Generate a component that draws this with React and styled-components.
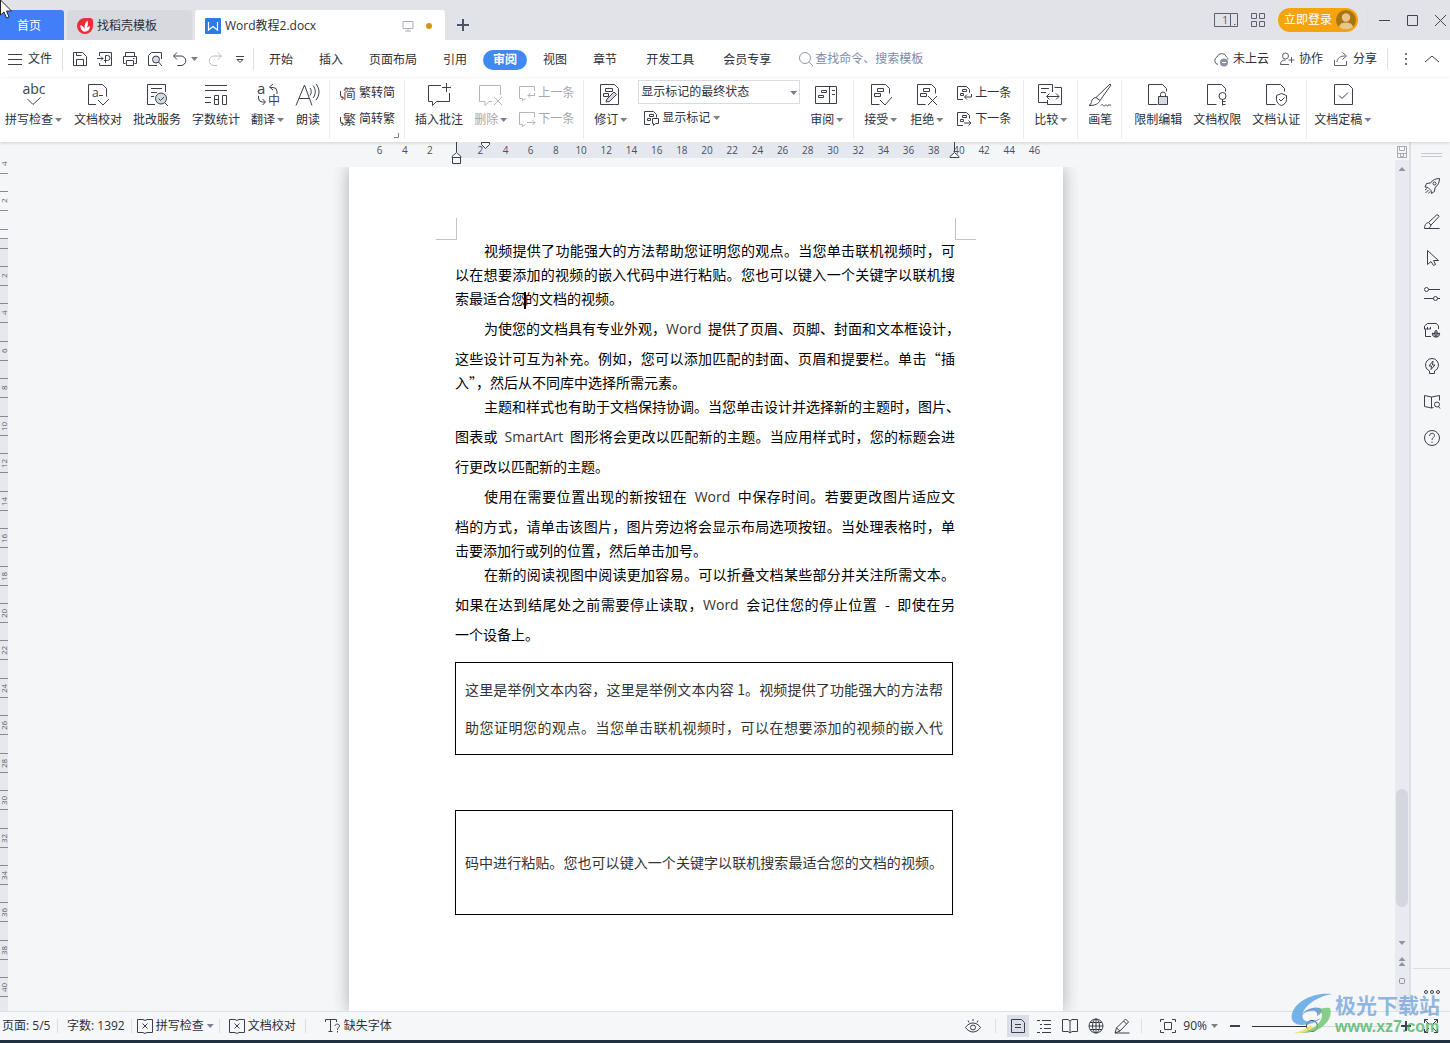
import React from "react";
import styled, { createGlobalStyle, css } from "styled-components";

const GlobalStyle = createGlobalStyle`
  *, *::before, *::after {
    box-sizing: border-box;
  }

  body {
    margin: 0;
    background: #f5f6f8;
    color: #2b303b;
    font-family: "Open Sans", "Noto Sans CJK SC", sans-serif;
    font-size: 12px;
    line-height: 16px;
  }

  button, input, select {
    font: inherit;
    color: inherit;
  }
`;

/* ---------- shared ---------- */

const App = styled.div`
  display: flex;
  flex-direction: column;
  height: 100vh;
  overflow: hidden;
`;

const PlainButton = styled.button`
  display: flex;
  align-items: center;
  justify-content: center;
  flex-shrink: 0;
  padding: 0;
  border: 0;
  background: none;
  white-space: nowrap;
`;

const Svg = styled.svg`
  display: block;
  flex-shrink: 0;
  fill: none;
  stroke: ${(p) => p.$color || "#3a3f4b"};
  stroke-width: ${(p) => p.$weight || 1};
  overflow: visible;

  text {
    fill: ${(p) => p.$color || "#3a3f4b"};
    stroke: none;
  }
`;

const Icon = ({ size = 16, box = size, color, weight, children }) => (
  <Svg width={size} height={size} viewBox={`0 0 ${box} ${box}`} $color={color} $weight={weight} aria-hidden="true">
    {children}
  </Svg>
);

const Caret = styled.span`
  flex-shrink: 0;
  width: 7px;
  height: 4px;
  background: ${(p) => p.$color || "#7b808c"};
  clip-path: ${(p) => (p.$up ? "polygon(50% 0, 100% 100%, 0 100%)" : "polygon(0 0, 100% 0, 50% 100%)")};
`;

const Rule = styled.span`
  flex-shrink: 0;
  width: 1px;
  height: ${(p) => p.$height || 22}px;
  background: #dddfe4;
`;

/* ---------- title bar ---------- */

const TitleBar = styled.header`
  display: flex;
  align-items: flex-end;
  flex-shrink: 0;
  height: 40px;
  background: #e2e3e8;
`;

const Tab = styled.button`
  display: flex;
  align-items: center;
  gap: 4px;
  width: ${(p) => p.$width}px;
  height: 30px;
  margin-right: 3px;
  padding: 2px 10px 0;
  border: 0;
  border-radius: 3px 3px 0 0;
  background: ${(p) => p.$bg};
  color: ${(p) => p.$color || "#2b303b"};
  white-space: nowrap;
`;

const HomeTab = styled(Tab)`
  justify-content: center;
  padding: 2px 6px 0 0;
`;

const TabStatus = styled.span`
  display: flex;
  align-items: center;
  gap: 12px;
  margin-left: auto;
  padding-right: 3px;
`;

const Unsaved = styled.span`
  width: 6px;
  height: 6px;
  border-radius: 50%;
  background: #d9940d;
`;

const NewTab = styled(PlainButton)`
  width: 30px;
  height: 30px;
`;

const WindowTools = styled.div`
  display: flex;
  align-items: center;
  gap: 13px;
  height: 40px;
  margin-left: auto;
  padding-right: 4px;
`;

const Login = styled(PlainButton)`
  gap: 4px;
  height: 24px;
  padding: 0 2px 0 6px;
  border-radius: 12px;
  background: #f6a40d;
  color: #fff;
`;

const Controls = styled.div`
  display: flex;
  align-items: center;
  gap: 17px;
  margin-left: -4px;

  ${Rule} {
    margin-right: -6px;
  }
`;

const Pointer = styled.div`
  position: absolute;
  top: 0;
  left: 0;
`;

/* ---------- menu bar ---------- */

const MenuBar = styled.nav`
  display: flex;
  align-items: center;
  flex-shrink: 0;
  height: 38px;
  background: #fff;
`;

const FileButton = styled(PlainButton)`
  gap: 6px;
  padding: 0 10px 0 8px;
`;

const QuickTools = styled.div`
  display: flex;
  align-items: center;
  gap: 9px;
  padding: 0 5px 0 9px;
`;

const UndoGroup = styled.div`
  display: flex;
  align-items: center;
  gap: 3px;
`;

const MenuTabs = styled.div`
  display: flex;
  gap: ${(p) => p.$gap}px;
  padding-top: 2px;
  padding-left: ${(p) => p.$left}px;
`;

const MenuTab = styled(PlainButton)`
  height: 20px;
  padding: 0 10px;
  border-radius: 10px;
  ${(p) =>
    p.$active &&
    css`
      background: #4189f2;
      color: #fff;
      font-weight: 700;
    `}
`;

const Search = styled.label`
  display: flex;
  align-items: center;
  gap: 2px;
  margin-left: 18px;

  input {
    width: 140px;
    padding: 0;
    border: 0;
    background: none;
    outline: 0;
  }

  input::placeholder {
    color: #7e8ba3;
    opacity: 1;
  }
`;

const ShareTools = styled.div`
  display: flex;
  align-items: center;
  gap: 10px;
  margin-left: auto;
  padding-right: 10px;

  button {
    gap: 4px;
  }
`;

/* ---------- ribbon ---------- */

const Ribbon = styled.section`
  display: flex;
  flex-shrink: 0;
  height: 64px;
  padding: 2px 0 3px;
  background: #fff;
  box-shadow: 0 1px 3px rgba(0, 0, 0, 0.16);
  position: relative;
`;

const Group = styled.div`
  position: relative;
  display: flex;
  align-items: flex-start;
  gap: ${(p) => p.$gap || 11}px;
  flex-shrink: 0;
  padding: 3px ${(p) => p.$right || 9}px 0 ${(p) => p.$left || 10}px;
  border-right: 1px solid #ebecef;

  &:last-child {
    border-right: 0;
  }
`;

const Launcher = styled(PlainButton)`
  position: absolute;
  right: 5px;
  bottom: 1px;
`;

const RibbonButton = styled(PlainButton)`
  flex-direction: column;
  gap: 5px;
  color: ${(p) => (p.disabled ? "#a6a8ad" : "#2b303b")};
`;

const Label = styled.span`
  display: flex;
  align-items: center;
  gap: 2px;
  height: 16px;

  ${Caret} {
    margin-right: 1px;
  }
`;

const Stack = styled.div`
  display: flex;
  flex-direction: column;
  gap: 10px;
  padding-top: 2px;
`;

const SmallButton = styled(PlainButton)`
  justify-content: flex-start;
  gap: 3px;
  height: 16px;
  color: ${(p) => (p.disabled ? "#a6a8ad" : "#2b303b")};
`;

const MarkupStack = styled.div`
  display: flex;
  flex-direction: column;
  gap: 6px;
  margin-top: -3px;

  ${SmallButton} {
    padding-left: 5px;
  }
`;

const SelectBox = styled.label`
  position: relative;

  select {
    display: block;
    width: 162px;
    height: 24px;
    padding: 0 16px 0 2px;
    border: 1px solid #d9dbe0;
    border-radius: 0;
    background: #fff;
    appearance: none;
  }

  ${Caret} {
    position: absolute;
    top: 11px;
    right: 3px;
    pointer-events: none;
  }
`;

const Big = ({ label, caret, disabled, children }) => (
  <RibbonButton disabled={disabled}>
    <Icon size={24} color={disabled ? "#b3b5ba" : undefined}>
      {children}
    </Icon>
    <Label>
      {label}
      {caret && <Caret />}
    </Label>
  </RibbonButton>
);

const Small = ({ label, caret, disabled, children }) => (
  <SmallButton disabled={disabled}>
    <Icon color={disabled ? "#b3b5ba" : undefined}>{children}</Icon>
    {label}
    {caret && <Caret />}
  </SmallButton>
);

/* ---------- work area ---------- */

const Work = styled.main`
  display: grid;
  grid-template-columns: 8px 1fr 16px 39px;
  flex: 1;
  min-height: 0;
`;

const SideRuler = styled.div`
  display: flex;
  flex-direction: column;
  padding: 3px 0 5px;
  background: linear-gradient(#f5f6f8 96px, #8d929c 96px, #8d929c 97px, #e6e8ee 97px);
`;

const SideCell = styled.div`
  display: flex;
  align-items: center;
  flex: 1;
  min-height: 0;

  span {
    width: 8px;
    height: 20px;
    border: solid #858a94;
    border-width: 1px 0;
    color: #5a5f6b;
    font-size: 8px;
    line-height: 8px;
    text-align: center;
    writing-mode: vertical-rl;
    transform: rotate(180deg);
  }

  &:first-child span {
    border-bottom: 0;
  }
`;

const Canvas = styled.div`
  display: flex;
  flex-direction: column;
  align-items: center;
  min-width: 0;
  padding-left: 9px;
  overflow: hidden;
`;

const TopRuler = styled.div`
  position: relative;
  display: flex;
  flex-shrink: 0;
  width: 714px;
  height: 25px;
  padding: 0 16px 0 18px;
  background: linear-gradient(#e6e8f0, #e6e8f0) 107px 0 / 499px 16px no-repeat;
  color: #4a5060;
  font-size: 10px;
  text-align: center;

  span {
    flex: 1;
  }
`;

const Marker = styled.div`
  position: absolute;
  top: 0;
  left: ${(p) => p.$left}px;
`;

const Page = styled.article`
  flex: 1;
  width: 714px;
  padding: 51px 108px 0 106px;
  background: #fff;
  box-shadow: 0 0 16px rgba(0, 0, 0, 0.3);
  clip-path: inset(0 -16px);
  color: #000;
  font-family: "Noto Sans CJK SC", sans-serif;
  font-size: 14px;
`;

const Corners = styled.div`
  display: flex;
  justify-content: space-between;
  height: 22px;
  margin: 0 -21px -2px -19px;
`;

const Corner = styled.span`
  width: 21px;
  border: solid #c3c3c3;
  border-width: ${(p) => (p.$right ? "0 0 1px 1px" : "0 1px 1px 0")};
`;

const Paragraph = styled.p`
  margin: 0;
`;

const Line = styled.span`
  display: block;
  padding-top: ${(p) => (p.$loose ? 6 : 0)}px;
  padding-left: ${(p) => (p.$first ? 29 : 0)}px;
  line-height: 24px;
  white-space: nowrap;
  text-align: justify;
  text-align-last: ${(p) => (p.$end ? "left" : "justify")};
`;

const Latin = styled.span`
  color: #333;
  font-family: "Open Sans", sans-serif;
  line-height: 14px;
`;

const TextCursor = styled.span`
  display: inline-block;
  width: 2px;
  height: 17px;
  margin: 0 -1px;
  background: #000;
  vertical-align: middle;
`;

const TextFrame = styled.section`
  display: flex;
  flex-direction: column;
  justify-content: center;
  height: ${(p) => p.$height}px;
  margin: ${(p) => p.$above}px 2px 0 0;
  padding: 0 9px 2px;
  border: 1px solid #000;
  color: #333;

  ${Line} {
    line-height: 38px;
  }
`;

const Scroll = styled.div`
  display: flex;
  flex-direction: column;
  align-items: center;
  padding-top: 4px;
  border-right: 2px solid #dfe0e5;
  background: linear-gradient(#f5f6f8 18px, #e9eaef 18px);
`;

const Thumb = styled.div`
  width: 12px;
  height: 118px;
  margin-top: auto;
  margin-bottom: 34px;
  border-radius: 6px;
  background: #d5d7df;
`;

const ScrollButtons = styled.div`
  display: flex;
  flex-direction: column;
  align-items: center;
  gap: 12px;
  padding-bottom: 27px;
`;

const ScrollUp = styled(PlainButton)`
  height: 22px;
`;

const DoubleArrow = styled.span`
  display: grid;
  gap: 1px;
`;

const Sidebar = styled.aside`
  display: flex;
  flex-direction: column;
  align-items: center;
  padding: 11px 0 0 2px;
`;

const Handle = styled.div`
  width: 21px;
  height: 4px;
  margin-bottom: 11px;
  border: solid #c6c8cf;
  border-width: 1px 0;
`;

const SideTool = styled(PlainButton)`
  width: 36px;
  height: 36px;
`;

const More = styled(PlainButton)`
  align-self: stretch;
  height: 43px;
  margin-top: auto;
  padding-top: 4px;
  border-top: 1px solid #dcdde2;
`;

/* ---------- status bar ---------- */

const StatusBar = styled.footer`
  display: flex;
  align-items: center;
  flex-shrink: 0;
  height: 32px;
  padding: 0 11px 0 2px;
  border-top: 1px solid #dfe0e4;
  border-bottom: 3px solid #22313f;
  background: #f6f7f9;
  white-space: nowrap;
`;

const StatusLeft = styled.div`
  display: flex;
  align-items: center;
  gap: 5px;

  button {
    gap: 3px;
  }
`;

const StatusText = styled.span`
  min-width: ${(p) => p.$width}px;
`;

const StatusTool = styled(PlainButton)`
  padding: 0 ${(p) => p.$right || 0}px 0 ${(p) => p.$left || 0}px;
`;

const StatusRight = styled.div`
  display: flex;
  align-items: center;
  gap: 4px;
  margin-left: auto;
`;

const Divider = styled.span`
  display: flex;
  padding: 0 ${(p) => p.$side}px;
`;

const ViewButton = styled(PlainButton)`
  width: 22px;
  height: 22px;
  background: ${(p) => (p.$active ? "#dbdee7" : "none")};
`;

const Zoom = styled.div`
  display: flex;
  align-items: center;
  gap: 12px;
  padding-left: 10px;
`;

const ZoomValue = styled(PlainButton)`
  gap: 4px;
  margin-left: -5px;
`;

const ZoomRange = styled.input`
  width: 141px;
  height: 14px;
  margin: 0 -4px 0 0;
  appearance: none;
  background: linear-gradient(90deg, #2b303b 40%, #d5d8de 40%) center / 100% 1px no-repeat;

  &::-webkit-slider-thumb {
    appearance: none;
    width: 12px;
    height: 12px;
    border: 1px solid #3a3f4b;
    border-radius: 50%;
    background: #f6f7f9;
  }
`;

const Watermark = styled.div`
  position: absolute;
  right: 10px;
  bottom: 7px;
  display: flex;
  align-items: center;
  gap: 3px;
  pointer-events: none;
`;

const WatermarkText = styled.div`
  color: rgba(77, 141, 210, 0.62);
  font-size: 21px;
  font-weight: 700;
  line-height: 26px;
  white-space: nowrap;

  small {
    display: block;
    color: rgba(64, 176, 92, 0.75);
    font-family: "Liberation Sans", sans-serif;
    font-size: 16px;
    line-height: 18px;
  }
`;

/* ---------- data ---------- */

const rulerMarks = [6, 4, 2, "", ...Array.from({ length: 23 }, (_, i) => (i + 1) * 2)];
const sideMarks = [4, 2, "", ...Array.from({ length: 20 }, (_, i) => (i + 1) * 2)];

const paragraphs = [
  [
    { text: "视频提供了功能强大的方法帮助您证明您的观点。当您单击联机视频时，可" },
    { text: "以在想要添加的视频的嵌入代码中进行粘贴。您也可以键入一个关键字以联机搜" },
    { text: "索最适合您|的文档的视频。" },
  ],
  [
    { text: "为使您的文档具有专业外观，Word  提供了页眉、页脚、封面和文本框设计，", loose: true },
    { text: "这些设计可互为补充。例如，您可以添加匹配的封面、页眉和提要栏。单击“插", loose: true },
    { text: "入”，然后从不同库中选择所需元素。" },
  ],
  [
    { text: "主题和样式也有助于文档保持协调。当您单击设计并选择新的主题时，图片、" },
    { text: "图表或  SmartArt  图形将会更改以匹配新的主题。当应用样式时，您的标题会进", loose: true },
    { text: "行更改以匹配新的主题。", loose: true },
  ],
  [
    { text: "使用在需要位置出现的新按钮在  Word  中保存时间。若要更改图片适应文", loose: true },
    { text: "档的方式，请单击该图片，图片旁边将会显示布局选项按钮。当处理表格时，单", loose: true },
    { text: "击要添加行或列的位置，然后单击加号。" },
  ],
  [
    { text: "在新的阅读视图中阅读更加容易。可以折叠文档某些部分并关注所需文本。" },
    { text: "如果在达到结尾处之前需要停止读取，Word  会记住您的停止位置  -  即使在另", loose: true },
    { text: "一个设备上。", loose: true },
  ],
];

const renderLine = (text) =>
  text
    .replace(/ /g, "\u00a0")
    .split(/([A-Za-z]+|\|)/)
    .map((part, i) => {
      if (part === "|") return <TextCursor key={i} />;
      return /^[A-Za-z]+$/.test(part) ? <Latin key={i}>{part}</Latin> : part;
    });

/* page outline with a marked-up block, used by the review icons */
const markedPage = (
  <>
    <path d="M2.500 1.500h14l4 4v5M2.500 1.500v20h8" />
    <path d="M8.500 5.500h6v3h-6zM5.500 10.500h6v3h-6z" />
  </>
);

const smallMarkedPage = (
  <>
    <path d="M7 14.500H1.500V1.500h9l3 3v3" />
    <path d="M6.500 4.500h4v2h-4zM4.500 8.500h3v2h-3z" />
  </>
);

const lockedPage = <path d="M11.500 21.500h-9v-20h14l4 4v3" />;

/* ---------- sections ---------- */

const Title = () => (
  <TitleBar>
    <HomeTab $width={64} $bg="#417ff9" $color="#fff">首页</HomeTab>
    <Tab $width={125} $bg="#d8d9de">
      <Icon size={16} box={15} color="none">
        <path d="M0 7.500A7.500 7.500 0 0 1 7.500 0H12a3 3 0 0 1 3 3v4.500A7.500 7.500 0 0 1 0 7.500z" fill="#ee2b39" />
        <path d="M7.200 13C4 12 3 9.500 3.300 6.500c2.200.8 3.500 2.500 3.900 4.500C6.500 7.500 7.500 4 9.800 2.300c1 3 .5 6-1.800 8.200 1-1.700 2.400-2.600 4.300-2.800-.3 3-2 5-5.100 5.300z" fill="#fff" />
      </Icon>
      找稻壳模板
    </Tab>
    <Tab $width={250} $bg="#fff">
      <Icon size={16} color="none">
        <rect width="16" height="16" rx="1" fill="#2d7be9" />
        <path d="M3.500 4v8L8 8.500l4.500 3.500V4" stroke="#fff" strokeWidth="1.200" />
      </Icon>
      Word教程2.docx
      <TabStatus>
        <Icon size={12} box={12} color="#a9adb7">
          <path d="M1 1.500h10v7H1zM6 8.500v2M3 11h6" />
        </Icon>
        <Unsaved />
      </TabStatus>
    </Tab>
    <NewTab aria-label="新建">
      <Icon size={12} box={12} color="#4c5468" weight={2}>
        <path d="M6 0v12M0 6h12" />
      </Icon>
    </NewTab>
    <WindowTools>
      <PlainButton aria-label="窗口">
        <Svg width="24" height="14" viewBox="0 0 24 14" $color="#5b6170" aria-hidden="true">
          <path d="M16.500.5H.5v13h16M16.500.5h7v13h-7zM20 11.500h1.500" />
          <text x="8" y="11" fontSize="11">1</text>
        </Svg>
      </PlainButton>
      <PlainButton aria-label="应用">
        <Icon size={14} box={14} color="#5b6170">
          <path d="M.5.500h5v5h-5zM8.500.500h5v5h-5zM.5 8.500h5v5h-5zM8.500 8.500h5v5h-5z" />
        </Icon>
      </PlainButton>
      <Login>
        立即登录
        <Icon size={20} box={20} color="none">
          <circle cx="10" cy="10" r="10" fill="#a97512" />
          <circle cx="10" cy="7.500" r="4.200" fill="#e9c48b" />
          <path d="M3 17c.6-3.200 3.200-4.600 7-4.600s6.400 1.400 7 4.600a10 10 0 0 1-14 0z" fill="#e9c48b" />
        </Icon>
      </Login>
      <Controls>
        <Rule $height={20} />
        <PlainButton aria-label="最小化">
          <Icon size={11} box={11} color="#3f4552"><path d="M0 5.500h11" /></Icon>
        </PlainButton>
        <PlainButton aria-label="最大化">
          <Icon size={11} box={11} color="#3f4552"><path d="M.5.500h10v10H.5z" /></Icon>
        </PlainButton>
        <PlainButton aria-label="关闭">
          <Icon size={11} box={11} color="#3f4552"><path d="M0 0l11 11M11 0L0 11" /></Icon>
        </PlainButton>
      </Controls>
    </WindowTools>
  </TitleBar>
);

const Menu = () => (
  <MenuBar>
    <FileButton>
      <Icon size={14} box={14}><path d="M0 2.500h14M0 7.500h14M0 12.500h14" /></Icon>
      文件
    </FileButton>
    <Rule />
    <QuickTools>
      <PlainButton aria-label="保存">
        <Icon><path d="M1.500 14.500v-13h9l4 4v9zM4.500 14.500v-6h7v6M4.500 1.500v3h5" /></Icon>
      </PlainButton>
      <PlainButton aria-label="输出为PDF">
        <Icon><path d="M2.500 5V1.500h12v13h-12V12M0 7.500h6M4 5.500l2 2-2 2M8.500 12V4.500h2a2.200 2.200 0 0 1 0 5H7" /></Icon>
      </PlainButton>
      <PlainButton aria-label="打印">
        <Icon><path d="M3.500 5V1.500h9V5M3.500 12.500h-2v-7h13v7h-2M4.500 9.500h7v5h-7zM11 7.500h1.500" /></Icon>
      </PlainButton>
      <PlainButton aria-label="打印预览">
        <Icon>
          <path d="M14.500 8V1.500h-10l-3 3v10H10" />
          <circle cx="9" cy="8.500" r="3.500" fill="#d5d9e0" />
          <path d="M11.500 11l3.500 4" />
        </Icon>
      </PlainButton>
      <UndoGroup>
        <PlainButton aria-label="撤销">
          <Icon><path d="M5 1.500L1.500 5 5 8.500M1.500 5H9a4.500 4.500 0 0 1 0 9.500H5.500" /></Icon>
        </PlainButton>
        <Caret />
      </UndoGroup>
      <PlainButton aria-label="恢复" disabled>
        <Icon color="#b9bcc3"><path d="M11 1.500L14.500 5 11 8.500M14.500 5H7a4.500 4.500 0 0 0 0 9.500h3" /></Icon>
      </PlainButton>
      <PlainButton aria-label="自定义快速访问工具栏">
        <Icon><path d="M4 5.500h8M5 8.500l3 3 3-3z" /></Icon>
      </PlainButton>
    </QuickTools>
    <Rule />
    <MenuTabs $gap={6} $left={5}>
      {["开始", "插入", "页面布局", "引用", "审阅", "视图", "章节"].map((name) => (
        <MenuTab key={name} $active={name === "审阅"}>{name}</MenuTab>
      ))}
    </MenuTabs>
    <MenuTabs $gap={9} $left={9}>
      <MenuTab>开发工具</MenuTab>
      <MenuTab>会员专享</MenuTab>
    </MenuTabs>
    <Search>
      <Icon size={14} box={14} color="#8f98a8"><circle cx="6" cy="6" r="5.500" /><path d="M10 10l4 4" /></Icon>
      <input type="text" aria-label="搜索" placeholder="查找命令、搜索模板" />
    </Search>
    <ShareTools>
      <PlainButton>
        <Icon color="#5b6170">
          <path d="M5 13.500a4 4 0 0 1-1-7.500 5 5 0 0 1 9.500 0c1 .5 1.500 1.500 1.500 2.500" />
          <circle cx="11" cy="11.500" r="4" fill="#8d93a1" stroke="none" />
          <path d="M9 11.500h4" stroke="#fff" />
        </Icon>
        未上云
      </PlainButton>
      <PlainButton>
        <Icon color="#5b6170">
          <circle cx="6.500" cy="5" r="3" />
          <path d="M10 13.500H1.500c0-3 1.500-4.500 5-4.500M12.500 6v6M9.500 9h6" />
        </Icon>
        协作
      </PlainButton>
      <PlainButton>
        <Icon color="#5b6170"><path d="M1.500 9v5.500h12V10M4 11c.5-4 3-6 8-6M9.500 1.500L13.500 5 9.500 8.500" /></Icon>
        分享
      </PlainButton>
      <Rule />
      <PlainButton aria-label="更多">
        <Icon color="none">
          <path d="M7 2h2v2H7zM7 7h2v2H7zM7 12h2v2H7z" fill="#6c717d" />
        </Icon>
      </PlainButton>
      <PlainButton aria-label="收起功能区"><Icon><path d="M1 11l7-6 7 6" /></Icon></PlainButton>
    </ShareTools>
  </MenuBar>
);

const ReviewRibbon = () => (
  <Ribbon>
    <Group $left={5}>
      <Big label="拼写检查" caret>
        <text x="12" y="11" fontSize="14" textAnchor="middle">abc</text>
        <path d="M5.500 16l5.500 5.500 7.500-7" />
      </Big>
      <Big label="文档校对">
        <path d="M10 21.500H2.500v-20h14l4 4v8M12 17l5 5 6-6M13 12.500h4" />
        <text x="6" y="14" fontSize="12">a</text>
      </Big>
      <Big label="批改服务">
        <path d="M10 21.500H2.500v-20h18V9M6 5.500h11M6 9.500h6M6 13.500h3" />
        <circle cx="16" cy="15.500" r="5.500" fill="#d5d9e0" />
        <path d="M13.500 15.500l2 2 3.500-3.500M20 20l3 3" />
      </Big>
      <Big label="字数统计">
        <path d="M1 2.500h22M1 7.500h22M1 14.500h6M1 19.500h6M10.500 12.500h4v9h-4zM10.500 16.500h4M18.500 12.500h4v9h-4z" />
      </Big>
      <Big label="翻译" caret>
        <text x="1" y="11" fontSize="15">a</text>
        <text x="12" y="22" fontSize="12">中</text>
        <path d="M17 1l-3.500 3L17 7M14 4.500h3a4 4 0 0 1 4 4V11M2.500 13v2a4 4 0 0 0 4 4H9M6.500 16l3 3-3 3" />
      </Big>
      <Big label="朗读">
        <path d="M0 22.500L8.500 2 16 22.500M3 15.500h10.500M14 5c1.700 2 1.700 5 0 7.500M17 2.500c3 3.500 3 9 0 12.500M20 1c4 5 4 11 0 16" />
      </Big>
    </Group>
    <Group>
      <Stack>
        <Small label="繁转简">
          <text x="3" y="13" fontSize="13">简</text>
          <path d="M.5 6v4a3 3 0 0 0 3 3M1.500 11l2 2-2 2" />
        </Small>
        <Small label="简转繁">
          <text x="3" y="13" fontSize="13">繁</text>
          <path d="M.5 6v4a3 3 0 0 0 3 3M1.500 11l2 2-2 2" />
        </Small>
      </Stack>
      <Launcher aria-label="更多设置">
        <Icon size={5} box={5} color="#7b808c"><path d="M4.500 0v4.500H0" /></Icon>
      </Launcher>
    </Group>
    <Group>
      <Big label="插入批注">
        <path d="M14 2.500H1.500v16h4v4l4-4h13V10M19.500 0v9M15 4.500h9" />
      </Big>
      <Big label="删除" caret disabled>
        <path d="M13 18.500h-3l-4 4v-4H.500v-16h21V12M15 14l8 8M23 14l-8 8" />
      </Big>
      <Stack>
        <Small label="上一条" disabled><path d="M15.500 6V1.500H.5v12h3v2l3-2M16 10.500H9M11.500 8L9 10.500l2.500 2.500M15.500 8v2.500" /></Small>
        <Small label="下一条" disabled><path d="M15.500 6V1.500H.5v12h3v2l3-2M8 11.500h8M13.500 9l2.500 2.500-2.500 2.500" /></Small>
      </Stack>
    </Group>
    <Group $gap={10}>
      <Big label="修订" caret>
        <path d="M15.500 21.500h4V5.500l-4-4h-14v20h14M6.500 5.500h7v3h-7zM4.500 10.500h5v3h-5z" />
        <path d="M7 19l1-3 7-7 2.500 2.500-7 7z" fill="#d5d9e0" />
      </Big>
      <MarkupStack>
        <SelectBox>
          <select aria-label="显示标记状态" defaultValue="final">
            <option value="final">显示标记的最终状态</option>
          </select>
          <Caret />
        </SelectBox>
        <Small label="显示标记" caret>
          {smallMarkedPage}
          <path d="M9.500 8.500h6v5h-3l-2 2v-2h-1z" fill="#fff" />
        </Small>
      </MarkupStack>
      <Big label="审阅" caret>
        <path d="M.5 3.500h21v17h-21zM14.500 3.500v17M17 7.500h3M17 11.500h3M6.500 7.500h5v2h-5zM3.500 12.500h5v2h-5z" />
      </Big>
    </Group>
    <Group $gap={12} $right={12}>
      <Big label="接受" caret>{markedPage}<path d="M11 17l5 5 7-8" /></Big>
      <Big label="拒绝" caret>{markedPage}<path d="M13 13l9 9M22 13l-9 9" /></Big>
      <Stack>
        <Small label="上一条">{smallMarkedPage}<path d="M15.500 9v3H9M11 9.500L8.500 12l2.500 2.500" /></Small>
        <Small label="下一条">{smallMarkedPage}<path d="M8 12h7M12.500 9.500L15 12l-2.500 2.500" /></Small>
      </Stack>
    </Group>
    <Group>
      <Big label="比较" caret>
        <path d="M13.500 9V1.500h-14v18h9V17M2 5.500h8M2 9.500h5M15.500 4.500h7v17h-14V17M8 13.500h12M10.500 10.500l-3 3 3 3M17 10.500l3 3-3 3" />
      </Big>
    </Group>
    <Group>
      <Big label="画笔">
        <path d="M8 14.500L22 1l1 1-11 15.500M8 14.500l4 3c-1.500 3.500-5 5-11 5 2-1 2-2 2.500-4 .5-2 2-4 4.500-4zM13 22.500c2-3 2 2 4 0s2 2 3 0 2 1 3-1" />
      </Big>
    </Group>
    <Group $left={12} $right={6}>
      <Big label="限制编辑">
        {lockedPage}
        <path d="M12.500 13.500h9v8h-9z" fill="#d5d9e0" />
        <path d="M14.500 13.500v-2a2.500 2.500 0 0 1 5 0v2" />
      </Big>
      <Big label="文档权限">
        {lockedPage}
        <circle cx="17.500" cy="13" r="3.500" />
        <path d="M17.500 16.500v6M17.500 18.500h3M17.500 21.500h3" />
      </Big>
      <Big label="文档认证">
        {lockedPage}
        <path d="M17.500 10.500l5 2v4c0 3-2 5-5 6-3-1-5-3-5-6v-4zM15 16l2 2 3.500-3.500" />
      </Big>
    </Group>
    <Group $left={7}>
      <Big label="文档定稿" caret>
        <path d="M3.500 1.500h14l4 4v16h-18zM8 12.500l3 3 6-6" />
      </Big>
    </Group>
  </Ribbon>
);

const Document = () => (
  <Canvas>
    <TopRuler>
      {rulerMarks.map((n, i) => (
        <span key={i}>{n}</span>
      ))}
      <Marker $left={102}>
        <Svg width="11" height="22" viewBox="0 0 11 22"><path d="M5.500 0v10M1 15.500v-1l4.500-4 4.500 4v1zM1.500 15.500h8v6h-8z" fill="#f5f6f8" /></Svg>
      </Marker>
      <Marker $left={132}>
        <Svg width="9" height="8" viewBox="0 0 9 8"><path d="M.5.500h8v2l-4 4-4-4z" fill="#f5f6f8" /></Svg>
      </Marker>
      <Marker $left={600}>
        <Svg width="11" height="16" viewBox="0 0 11 16"><path d="M5.500 0v10M1 15.500v-1l4.500-4 4.500 4v1z" fill="#f5f6f8" /></Svg>
      </Marker>
    </TopRuler>
    <Page>
      <Corners>
        <Corner />
        <Corner $right />
      </Corners>
      {paragraphs.map((lines, p) => (
        <Paragraph key={p}>
          {lines.map((line, i) => (
            <Line key={i} $first={i === 0} $end={i === lines.length - 1} $loose={line.loose}>
              {renderLine(line.text)}
            </Line>
          ))}
        </Paragraph>
      ))}
      <TextFrame $height={93} $above={16}>
        <Line>这里是举例文本内容，这里是举例文本内容 1。视频提供了功能强大的方法帮</Line>
        <Line>助您证明您的观点。当您单击联机视频时，可以在想要添加的视频的嵌入代</Line>
      </TextFrame>
      <TextFrame $height={105} $above={55}>
        <Line>码中进行粘贴。您也可以键入一个关键字以联机搜索最适合您的文档的视频。</Line>
      </TextFrame>
    </Page>
  </Canvas>
);

const ScrollBar = () => (
  <Scroll>
    <Icon size={12} box={12} color="#a7abb9">
      <path d="M1.500.500h9v11h-9zM3.500 1v3.500l5 0V1M1.500 7.500h9M4.500 7.500v3h3v-3" />
    </Icon>
    <ScrollUp aria-label="向上滚动">
      <Caret $up $color="#8e93a3" />
    </ScrollUp>
    <Thumb />
    <ScrollButtons>
      <Caret $color="#8e93a3" />
      <DoubleArrow><Caret $up $color="#8e93a3" /><Caret $up $color="#8e93a3" /></DoubleArrow>
      <Icon size={6} box={6} color="#8e93a3"><rect x=".5" y=".5" width="5" height="5" rx="1" /></Icon>
    </ScrollButtons>
  </Scroll>
);

const sideTools = [
  ["推荐", <path d="M15.500.500c-4 0-7 1.500-9 4.500l-4 .5L1 9l3 .5 3 3 .5 3 3-2 .5-4c3-2 4.500-5 4.500-9zM10.500 4a1.500 1.500 0 1 1 0 3 1.500 1.500 0 0 1 0-3M1 12l2-1.500M1.500 15l3-3M4.500 15.500L6 13.500" />],
  ["样式", <path d="M.5 14.500h15M.5 14.500c0-3 1-5.500 4-6l2.500 2.500c-.5 2.500-2 3.500-4 3.500M4.500 8.500l8-7.500h1.500l1 1.500L7 11" />],
  ["选择", <path d="M3.500.500v14l3.500-3 2.500 4 2-1-2-4h5z" />],
  ["设置", <path d="M4.500 3.500H16M0 12.500h9.500M13.500 12.500H16M.5 3.500a2 2 0 1 0 4 0 2 2 0 0 0-4 0M9.500 12.500a2 2 0 1 0 4 0 2 2 0 0 0-4 0" />],
  ["稻壳", <><path d="M14.500 7V4l-2-2.500h-9L.5 4v3l1 .5v7H7M.5 7h3V5M3.500 7h3V5" /><path d="M11 15c-2-.5-3-2-2.500-4l2 1c0-2 .5-3 1.500-4 1 1 1.500 2 1.500 4l2-1c.5 2-.5 3.500-2.500 4zM12 10v5" fill="#9a9fab" /></>],
  ["助手", <path d="M5.500 15.500h5M5.500 15.500V13a6.500 6.500 0 1 1 5 0v2.500M9 3L5 8h2.500L7 11.500 11 7H8.500z" />],
  ["查词", <path d="M7.500 3v11M7.500 3l-7-1.500v11l7 1.500 2-.5M7.500 3l8-1.500v5M10.500 10.500a2.500 2.500 0 1 0 5 0 2.500 2.500 0 0 0-5 0M14.500 12.500l1.500 2" />],
  ["帮助", <path d="M.5 8a7.500 7.500 0 1 0 15 0 7.500 7.500 0 0 0-15 0M5.500 6c0-3.500 5-3.500 5-.5 0 2-2.500 2-2.500 4.500M8 11.500v1.500" />],
];

const checkIcon = <path d="M6 1.500H.5v13H6l2 1 2-1h5.500v-13H10l-2 1zM5.500 5.500l5 5M10.500 5.500l-5 5" />;

const Status = () => (
  <StatusBar>
    <StatusLeft>
      <StatusText $width={50}>页面: 5/5</StatusText>
      <Rule $height={14} />
      <StatusTool $left={4} $right={1}>字数: 1392</StatusTool>
      <Rule $height={14} />
      <PlainButton><Icon>{checkIcon}</Icon>拼写检查<Caret /></PlainButton>
      <Rule $height={14} />
      <StatusTool $left={4} $right={4}><Icon>{checkIcon}</Icon>文档校对</StatusTool>
      <Rule $height={14} />
      <StatusTool $left={14}>
        <Icon><path d="M.5 4V1.500h11V4M5.500 1.500v12M3.500 13.500h4M10 8c0-2.500 4.500-2.500 4.500 0 0 1.500-2 1.500-2 4M12.500 13v1.500" /></Icon>
        缺失字体
      </StatusTool>
    </StatusLeft>
    <StatusRight>
      <ViewButton aria-label="护眼模式">
        <Icon><path d="M.5 9.500c4-6 11-6 15 0-4 6-11 6-15 0M8 1v2M3 2.500l1 2M13 2.500l-1 2" /><circle cx="8" cy="9.500" r="2.500" /></Icon>
      </ViewButton>
      <Divider $side={7}><Rule $height={14} /></Divider>
      <ViewButton $active aria-label="页面视图">
        <Icon><path d="M1.500 1.500h10l3 3v10h-13zM5 6.500h6M5 9.500h6" /></Icon>
      </ViewButton>
      <ViewButton aria-label="大纲">
        <Icon><path d="M1 2.500h3M6 2.500h9M4 6.500h2M8 6.500h7M4 10.500h2M8 10.500h7M1 14.500h3M6 14.500h9" /></Icon>
      </ViewButton>
      <ViewButton aria-label="阅读版式">
        <Icon><path d="M.5 1.500H6L8 3l2-1.500h5.500v12H10L8 15l-2-1.500H.5zM8 3v12" /></Icon>
      </ViewButton>
      <ViewButton aria-label="Web版式">
        <Icon><circle cx="8" cy="8" r="7" /><ellipse cx="8" cy="8" rx="3.500" ry="7" /><path d="M1 8h14M2 4.500h12M2 11.500h12M8 1v14" /></Icon>
      </ViewButton>
      <ViewButton aria-label="写作模式">
        <Icon><path d="M1 15l1.500-5 9-9 3 3-8.500 9-5 2h14.500M2.500 10l3.500 3M9.500 3l3 3" /></Icon>
      </ViewButton>
      <Divider $side={4}><Rule $height={14} /></Divider>
      <Zoom>
        <PlainButton aria-label="适应窗口">
          <Icon><path d="M.5 4V1.500H4M12 1.500h3.500V4M15.500 12v2.500H12M4 14.500H.5V12M4.500 4.500h7v7h-7z" /></Icon>
        </PlainButton>
        <ZoomValue>90%<Caret /></ZoomValue>
        <PlainButton aria-label="缩小"><Icon size={10} box={10} weight={2}><path d="M0 5h10" /></Icon></PlainButton>
        <ZoomRange type="range" aria-label="缩放" min="0" max="100" defaultValue="42" />
        <PlainButton aria-label="放大"><Icon size={10} box={10} weight={2}><path d="M0 5h10M5 0v10" /></Icon></PlainButton>
        <PlainButton aria-label="全屏">
          <Icon><path d="M1.500 5V1.500H5M11 1.500h3.500V5M14.500 11v3.500H11M5 14.500H1.500V11M1.500 1.500L6 6M14.500 1.500L10 6M14.500 14.500L10 10M1.500 14.500L6 10" /></Icon>
        </PlainButton>
      </Zoom>
    </StatusRight>
  </StatusBar>
);

const Brand = () => (
  <Watermark>
    <Svg width="42" height="42" viewBox="0 0 42 42" $color="none">
      <path d="M42 1C25-1 8 7 3 18c-4 9 1 14 9 14 8 0 15-3 19-7-6 3-13 5-17 2C8 20 20 5 42 1z" fill="#4a9be0" opacity=".75" />
      <path d="M11 24c2-7 12-11 19-9 4 2 1 6-3 8 1-4-2-6-6-5-4 0-8 2-10 6z" fill="#3f7fce" opacity=".7" />
      <path d="M40 15c4 12-10 26-30 25 13-3 22-10 22-18 0-2-2-4-5-4 4-3 8-4 13-3z" fill="#6cc46c" opacity=".8" />
      <path d="M3 40c7-1 13-4 17-8l4 2c-5 4-12 7-21 6z" fill="#f1dc56" opacity=".8" />
    </Svg>
    <WatermarkText>
      极光下载站
      <small>www.xz7.com</small>
    </WatermarkText>
  </Watermark>
);

export default function WriterApp() {
  return (
    <App>
      <GlobalStyle />
      <Title />
      <Menu />
      <ReviewRibbon />
      <Work>
        <SideRuler>
          {sideMarks.map((n, i) => (
            <SideCell key={i}><span>{n}</span></SideCell>
          ))}
        </SideRuler>
        <Document />
        <ScrollBar />
        <Sidebar>
          <Handle />
          {sideTools.map(([name, drawing]) => (
            <SideTool key={name} aria-label={name}><Icon>{drawing}</Icon></SideTool>
          ))}
          <More aria-label="更多">
            <Icon><circle cx="2" cy="8" r="1.500" /><circle cx="8" cy="8" r="1.500" /><circle cx="14" cy="8" r="1.500" /></Icon>
          </More>
        </Sidebar>
      </Work>
      <Status />
      <Brand />
      <Pointer>
        <Svg width="12" height="19" viewBox="0 0 12 19" $color="#222">
          <path d="M.5 0v15l3.500-3 2.500 6 2.500-1-2.500-6h5z" fill="#fff" />
        </Svg>
      </Pointer>
    </App>
  );
}
